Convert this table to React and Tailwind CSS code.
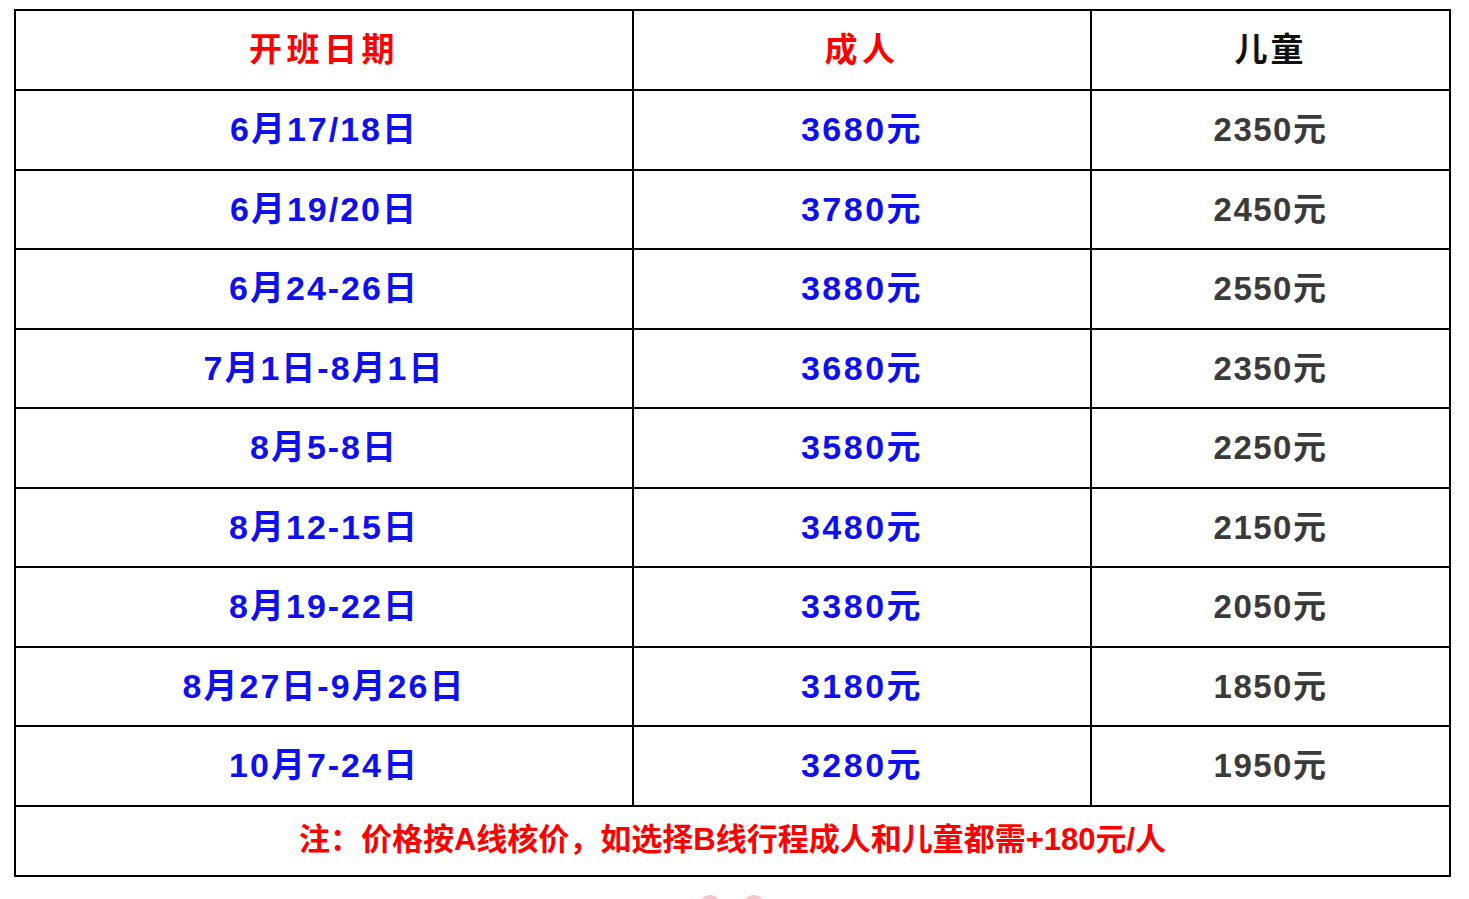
import React from "react";

const rows = [
  ["6月17/18日", "3680元", "2350元"],
  ["6月19/20日", "3780元", "2450元"],
  ["6月24-26日", "3880元", "2550元"],
  ["7月1日-8月1日", "3680元", "2350元"],
  ["8月5-8日", "3580元", "2250元"],
  ["8月12-15日", "3480元", "2150元"],
  ["8月19-22日", "3380元", "2050元"],
  ["8月27日-9月26日", "3180元", "1850元"],
  ["10月7-24日", "3280元", "1950元"],
];

const font = { fontFamily: '"Liberation Sans", "Noto Sans CJK SC", sans-serif' };

export default function App() {
  return (
    <div className="min-h-screen bg-white overflow-hidden" style={font}>
      <div className="pl-[14px] pt-[9px] w-[1450px]">
        <table className="w-[1435px] border-collapse table-fixed border-2 border-black font-bold text-center">
          <colgroup>
            <col className="w-[618px]" />
            <col className="w-[458px]" />
            <col className="w-[359px]" />
          </colgroup>
          <thead>
            <tr className="h-[80px]">
              <th className="border-2 border-black text-[#ff0000] text-[33px] tracking-[4.5px]">开班日期</th>
              <th className="border-2 border-black text-[#ff0000] text-[33px] tracking-[4.5px]">成人</th>
              <th className="border-2 border-black text-[#111] text-[33px] tracking-[3px]">儿童</th>
            </tr>
          </thead>
          <tbody>
            {rows.map(([date, adult, child], i) => (
              <tr key={i} className="h-[79.5px]">
                <td className="border-2 border-black text-[#1010ee] text-[34px] tracking-[2px]">{date}</td>
                <td className="border-2 border-black text-[#1010ee] text-[34px] tracking-[2.5px]">{adult}</td>
                <td className="border-2 border-black text-[#3a3a3a] text-[33px] tracking-[1.5px]">{child}</td>
              </tr>
            ))}
            <tr className="h-[70px]">
              <td colSpan={3} className="border-2 border-black text-[#ff0000] text-[31px]">
                注：价格按A线核价，如选择B线行程成人和儿童都需+180元/人
              </td>
            </tr>
          </tbody>
        </table>
        {/* pink decoration peeking at bottom */}
        <div className="flex justify-center gap-[22px] pt-[18px]">
          <span className="block w-[22px] h-[22px] rounded-full bg-[#f5c6cf]" />
          <span className="block w-[22px] h-[22px] rounded-full bg-[#f5c6cf]" />
        </div>
      </div>
    </div>
  );
}
